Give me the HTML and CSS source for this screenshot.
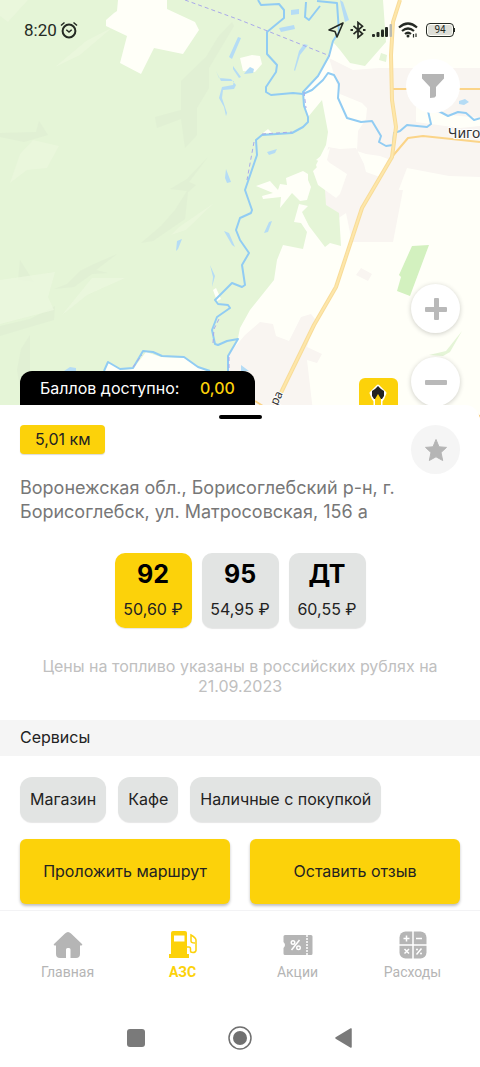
FILE: index.html
```html
<!DOCTYPE html>
<html lang="ru">

<head>
    <meta charset="utf-8">
    <meta name="viewport" content="width=device-width, initial-scale=1">
    <title>АЗС</title>
    <link rel="stylesheet" href="styles.css">
</head>

<body>
    <section class="map">
        <svg class="map-canvas" viewBox="0 0 480 420" preserveAspectRatio="xMidYMid slice" aria-hidden="true">
            <rect width="480" height="420" fill="#fffff8" />

            <!-- Built-up areas -->
            <g fill="#f9f5f1">
                <path d="M329 58l24 12 26-2h101v109l-31-1-42-8-16 42H326l-1-18 1-28 2-17 12 2 16-1 8 16 2 8 14 5 8-18-8-3-14-2-9-3 1-20 8-12 1-11-5-5-22-9z" />
                <path d="M325 190h78l-10 52h-41l-6-29-12 8-9-20z" />
                <path d="M228 355l17-20 15-13 13 2 3 12 13 5 12-24 10-3 4 5-8 28 15 7-5 9-10-3 7 60h-86z" />
                <path d="M361 268l11 6-4 7-12-6z" />
            </g>
            <path d="M416 106l25 8 39 4v8l-20 2-44-6z" fill="#fffff8" />

            <!-- Forest -->
            <g fill="#e5f5d7">
                <path d="M0 0H383L386 42 365 66 350 63 340 50 333 42 329 58 318 76 303 92 305 110 308 117 322 100 328 132 326 145 316 165 325 190 326 205 339 213 341 246 330 243 325 247 309 226 302 212 308 206 299 204 294 222 301 223 307 232 303 249 283 245 277 260 274 280 250 310 240 328 238 338 228 356V371H0z" />
            </g>
            <path d="M412 246l17-1-19 51-13-5 4-14-2-2z" fill="#d3f1bf" />
            <path d="M429 355l17-4 16-20-12 21-7 4z" fill="#e5f5d7" />
            <path d="M381 53l6 2-1 7-7-2z" fill="#e5f5d7" />
            <path d="M0 370h110v50H0z" fill="#e5f5d7" />

            <!-- Terrain shading -->
            <g fill="#dfeed3" opacity=".6">
                <path d="M232 22l-14 15-12 20-25 24v29l-26 7 2 11 24-9 4 29 12-13v-27l12-20v-20l25-42z" />
                <path d="M208 157l-21 22-17 10 17 2-12 19-14 16-20 17 12-2 32-22 3-27 8-7-7-3z" />
                <path d="M0 133l36-1 3-11 9 14-24 7-24-5z" />
                <path d="M117 254l-23 10-14 7-13 13-13 5 20-2 18-13 16-1-12-3z" />
                <path d="M30 335l-9 14-4 21 3 17 10-4zM0 326l30-7 25-13-1 14-24 7-30 9z" />
                <path d="M20 260l14 22-16-2z" />
            </g>
            <g fill="#edf8df" opacity=".7">
                <path d="M33 140l26 6-12 22-20 2-17 13 10-29zM0 0h28L8 22 0 16zM113 27L80 55 55 67l31-26z" />
                <path d="M0 280l55-8-7 25 6 13-54 14zM125 278l-38 17-25 20 30-37zM214 203l-35 24-8 8 15-5z" />
            </g>

            <!-- Clearings -->
            <g fill="#fffff8">
                <path d="M118 0h49v9l28 13 4 8-16 24-29-6-13 26-21-11 7-27-21-10v-6l8-7 3-2z" />
                <path d="M240 58l12-3 8 1 2 8-7 8-12-1z" />
                <path d="M256 186L270 181 278 190 280 184 287 185 286 178 303 171 308 174V180L311 187 307 200 300 201 292 193 280 208 281 197 263 199 262 196 273 193z" />
                <path d="M330 148L316 160 322 162 313 171 318 185 336 198 340 194 347 174 330 163 327 160z" />
                <path d="M104 371l5-9 13 8 11-1 13-17 15 5 24 1 17 11 8 4H228V420H104z" />
                <path d="M213 290l4 11 4-2-5-11zM263 133l5-4 4 4z" />
            </g>

            <!-- Rivers -->
            <g fill="none" stroke="#91ccf3" stroke-width="2" stroke-linejoin="round">
                <path d="M317 1L337 3 339 32 333 41 329 56 318 76 303 92 304 106 308 117V122L303 127 292 133 262 135 256 140 257 155 245 190 252 210 251 213 240 218 236 230 240 240 249 253 242 265 245 285 242 287 232 283 215 300 218 304 228 305 230 308 217 317 212 330 215 344 218 345 227 341 238 339 228 356V372" />
                <path d="M258 0l3 5 18-1 5 6v8l-17 14v22l10 11-1 7-10 15v5l5 3 22-2 10 1 9-4 11-10 5-7 6 2 5 9-1 14 9 20 14 4 11-1 9 15-2 6 7 4 7-1 1-12 6-2 7-6 20 2 4-3-3-13 5-3 15 8 10-4 8 1 8 7 14-4" />
                <path d="M306 2l-1 15 4 3 11-14M104 371l4-9 12 7 13-1 10-17 10 1 9 4 22 1 14 10 12 4" />
            </g>
            <g fill="#b5dcf5">
                <path d="M340 0l3 2 6 18-4 2-4-17zM291 10l8-1v5l-8 1zM279 28l15-3 1 4-14 3zM304 44l4 1-8 10-5 16-1-1 5-19zM250 67l4 2-1 4-9 1 3-4zM216 71l3 7 12 1 5 6-2 4-11 1-1 8 5 15-1 3-2-9-5-9 3-11 11-2 1-4-13 0-2-4z" />
                <path d="M226 169l5 13-4 1-2-5zM229 57l9-20 3 1-9 21zM233 66l8 11-2 1-6-9zM267 152l10-3-2 4-6 2zM269 222l3-1-4 11-4 1zM224 231l8 14 3 2-6-14zM210 265l5 11-3 11 1-10zM177 241l5-2-4 10-2 2zM459 101l6-2 4 3-5 3-5-1zM64 371l6-4 6 1v4zM241 365l8 6h-8z" />
            </g>

            <!-- District borders -->
            <g fill="none" stroke="#a9a9ea" stroke-width="1" stroke-dasharray="4 3">
                <path d="M185 0l55 20 90 36M262 134l30-2M254 142l-7 38M304 92l2 16M213 343l1-14 5-10M133 367l9-12M229 368v-14" />
            </g>

            <!-- Roads -->
            <g fill="none" stroke-linejoin="round">
                <path d="M393 89h87M391 158l17-20 15-2 57 6M255 401l8 5" stroke="#fbd488" stroke-width="2" />
                <path d="M400 0l-7 22-2 33 1 45 4 27-4 30-30 51-26 79-22 38-40 82" stroke="#f8dc99" stroke-width="4" />
                <path d="M400 0l-7 22-2 33 1 45 4 27-4 30-30 51-26 79-22 38-40 82" stroke="#fee7aa" stroke-width="2" />
                <path d="M477 414l3 3" stroke="#f8b84d" stroke-width="2" />
            </g>

            <g class="map-label">
                <text x="448" y="138">Чиго</text>
                <text transform="translate(277 406) rotate(-64)" class="map-label-small">ра</text>
            </g>

            <!-- Station pin -->
            <rect x="359" y="378" width="39" height="42" rx="6" fill="#fcd20a" />
            <path d="M378 386l7 7-2 5-2 3v19h-6v-19l-2-3-2-5z" fill="#fff" stroke="#fff" stroke-width="3" stroke-linejoin="round" />
            <path d="M378 386l3 3 3 2v5l-2 3h-8l-2-3v-5l3-2z" fill="#222" />
            <path d="M375 420v-21l3-5 3 5v21z" fill="#fcd20a" />
        </svg>

        <div class="status-bar">
            <span>8:20</span>
            <svg width="18" height="18" viewBox="0 0 18 18" fill="none" stroke="#252a24" stroke-width="2">
                <circle cx="9" cy="10" r="6.4" />
                <path d="M6.300 8.700L9 11l2.700-2.300M1 4.500L4.500 1.500M17 4.500L13.500 1.500" stroke-width="1.500" />
            </svg>
            <div class="status-icons">
                <svg width="18" height="18" viewBox="0 0 18 18" fill="none" stroke="#252a24" stroke-width="1.600" stroke-linejoin="round">
                    <path d="M16 2L2 9l6 1.500L10 16z" />
                </svg>
                <svg width="16" height="18" viewBox="0 0 16 18" fill="none" stroke="#252a24" stroke-width="1.700">
                    <path d="M3.500 4.800l9 8L8 16.500v-15l4.500 3.700-9 8" />
                    <path d="M.5 9h2.500M13 9h2.500" stroke-width="2" />
                </svg>
                <svg width="22" height="18" viewBox="0 0 22 18" fill="#252a24">
                    <rect x="1" y="13" width="3" height="3" rx="1" />
                    <rect x="5.500" y="11" width="3" height="5" rx="1" />
                    <rect x="10" y="8.500" width="3" height="7.500" rx="1" />
                    <rect x="14" y="6" width="3" height="10" rx="1" />
                    <rect x="18.500" y="3" width="2.500" height="13" rx="1" fill="#b9bbb2" />
                </svg>
                <svg width="20" height="18" viewBox="0 0 20 18" fill="none" stroke="#252a24" stroke-width="2.200">
                    <path d="M1 6.500q9-8 18 0M4 10q6-5 12 0M7 13q3-2.500 6 0" />
                    <circle cx="10" cy="15" r="1.500" fill="#252a24" stroke="none" />
                    <path d="M15.500 13v3.500M18 12.500V16" stroke-width="1.200" />
                </svg>
                <span class="battery">94</span>
            </div>
        </div>

        <div class="map-overlay">
            <div class="balance">Баллов доступно: <b>0,00</b></div>
            <div class="map-controls">
                <button type="button" class="round-button filter" aria-label="Фильтр">
                    <svg width="24" height="26" viewBox="0 0 24 26" fill="#b5b5b5">
                        <path d="M1 1h22v4.500l-8 8.500v9l-1.500 1.500L9 25V14L1 5.500z" />
                    </svg>
                </button>
                <button type="button" class="round-button zoom" aria-label="Приблизить">
                    <svg width="22" height="22" viewBox="0 0 22 22" fill="#b9b9b9">
                        <rect y="9" width="22" height="5" rx="1" />
                        <rect x="9" width="5" height="22" rx="1" />
                    </svg>
                </button>
                <button type="button" class="round-button zoom" aria-label="Отдалить">
                    <svg width="22" height="22" viewBox="0 0 22 22" fill="#b9b9b9">
                        <rect y="9" width="22" height="5" rx="1" />
                    </svg>
                </button>
            </div>
        </div>
    </section>

    <main class="sheet">
        <div class="handle"></div>
        <div class="sheet-top">
            <span class="distance">5,01 км</span>
            <button type="button" class="round-button favourite" aria-label="В избранное">
                <svg width="22" height="22" viewBox="0 0 22 22" fill="#b5b5b5" stroke="#b5b5b5" stroke-linejoin="round">
                    <path d="M11 .5l3 7.300 7.500.6-5.500 5.100 1.700 8L11 17.800 4.300 21.500l1.700-8L.5 8.400 8 7.800z" />
                </svg>
            </button>
        </div>
        <p class="address">Воронежская обл., Борисоглебский р-н, г. Борисоглебск, ул. Матросовская, 156 а</p>

        <div class="fuels">
            <button type="button" class="fuel active"><b>92</b><span>50,60 ₽</span></button>
            <button type="button" class="fuel"><b>95</b><span>54,95 ₽</span></button>
            <button type="button" class="fuel"><b>ДТ</b><span>60,55 ₽</span></button>
        </div>
        <p class="note">Цены на топливо указаны в российских рублях на 21.09.2023</p>

        <h2>Сервисы</h2>
        <ul class="services">
            <li>Магазин</li>
            <li>Кафе</li>
            <li>Наличные с покупкой</li>
        </ul>
        <div class="actions">
            <button type="button">Проложить маршрут</button>
            <button type="button">Оставить отзыв</button>
        </div>
    </main>

    <nav class="tabs">
        <a href="#home">
            <svg width="30" height="28" viewBox="0 0 30 28" fill="#b5b5b5">
                <path d="M15 1q1.500 0 3 1.500L29 13q1 1.300-.6 1.500H27V23q0 4-4 4h-5.500v-8.500q0-1.500-1.500-1.500h-1.500q-1.500 0-1.500 1.500V27H7q-4 0-4-4v-8.500H1.600Q0 14.300 1 13L12 2.500Q13.500 1 15 1z" />
            </svg>
            Главная
        </a>
        <a href="#stations" class="current">
            <svg width="30" height="28" viewBox="0 0 30 28" fill="#fcd20a">
                <path fill-rule="evenodd" d="M5 0h12q2 0 2 2v21h2v4H1v-4h2V2q0-2 2-2zm1 4.500v6h10.500v-6z" />
                <path d="M19 16h2q1.500 0 1.500 2v2q0 1.500 2.500 1.500t3-2V9q0-2-5-5v6q0 2 4 2" fill="none" stroke="#fcd20a" stroke-width="1.500" />
            </svg>
            АЗС
        </a>
        <a href="#offers">
            <svg width="30" height="28" viewBox="0 0 30 28">
                <path d="M2 4h26q1.500 0 1.500 1.500v17Q29.500 24 28 24H2Q.5 24 .5 22.500V17q3-3 0-6V5.500Q.5 4 2 4z" fill="#b5b5b5" />
                <g fill="none" stroke="#fff">
                    <path d="M24 4v20" stroke-width="1.500" stroke-dasharray="2 1" />
                    <path d="M16.500 9l-8 10" stroke-width="1.500" />
                    <circle cx="10" cy="11.500" r="1.800" stroke-width="1.400" />
                    <circle cx="15.500" cy="16.800" r="1.800" stroke-width="1.400" />
                </g>
            </svg>
            Акции
        </a>
        <a href="#expenses">
            <svg width="28" height="28" viewBox="0 0 28 28">
                <rect x=".5" y=".5" width="27" height="27" rx="6" fill="#b5b5b5" />
                <path d="M14 0v28M0 14h28" stroke="#fff" stroke-width="1.500" />
                <path d="M4.500 7.500h6M7.500 4.500v6M17 7.500h6M5.500 18l4.500 4.500M10 18l-4.500 4.500M17.500 23.500l5-6" stroke="#fff" stroke-width="1.500" />
                <circle cx="18" cy="18.500" r="1" fill="#fff" />
                <circle cx="22" cy="22.500" r="1" fill="#fff" />
            </svg>
            Расходы
        </a>
    </nav>

    <div class="system-nav">
        <button type="button" aria-label="Недавние">
            <svg width="24" height="24" viewBox="0 0 24 24"><rect x="3" y="3" width="18" height="18" rx="3" fill="#7a7a7a" /></svg>
        </button>
        <button type="button" aria-label="Домой">
            <svg width="24" height="24" viewBox="0 0 24 24">
                <circle cx="12" cy="12" r="11" fill="none" stroke="#707070" stroke-width="1.500" />
                <circle cx="12" cy="12" r="7" fill="#707070" />
            </svg>
        </button>
        <button type="button" aria-label="Назад">
            <svg width="24" height="24" viewBox="0 0 24 24"><path d="M19 3v18L4 12z" fill="#7a7a7a" stroke="#7a7a7a" stroke-width="1.500" stroke-linejoin="round" /></svg>
        </button>
    </div>
</body>

</html>
```
FILE: styles.css
```css
:root {
    --yellow: #fcd20a;
    --grey: #e2e4e3;
    --muted: #b5b5b5;
    --side: 20px;
}

* {
    box-sizing: border-box;
}

body {
    margin: 0;
    min-height: 100vh;
    display: flex;
    flex-direction: column;
    background: #fff;
    color: #222;
    font-family: Inter, "Noto Sans", sans-serif;
    font-size: 16px;
    font-weight: 400;
    line-height: 20px;
}

button {
    border: none;
    padding: 0;
    background: none;
    font: inherit;
    color: inherit;
    cursor: pointer;
}

svg {
    display: block;
    flex: none;
}

/* Map */
.map {
    position: relative;
    flex: 1;
    min-height: 320px;
    display: flex;
    flex-direction: column;
    overflow: hidden;
}

.map-canvas {
    position: absolute;
    inset: 0;
    width: 100%;
    height: 100%;
}

.map-label {
    font-family: "Noto Sans", sans-serif;
    font-size: 14px;
    fill: #333;
    stroke: #fff;
    stroke-width: 2px;
    paint-order: stroke;
}

.map-label-small {
    font-size: 12px;
}

.status-bar {
    position: relative;
    display: flex;
    align-items: center;
    gap: 3px;
    padding: 20px 26px 0 24px;
    font-family: Roboto, sans-serif;
    font-size: 17px;
    color: #252a24;
}

.status-icons {
    margin-left: auto;
    display: flex;
    align-items: center;
    gap: 5px;
}

.battery {
    position: relative;
    width: 28px;
    margin-left: 3px;
    border: 1px solid #252a24;
    border-radius: 4px;
    background: #dedfd8;
    box-shadow: inset 0 0 0 1px #fffff8;
    font-size: 10px;
    line-height: 12px;
    text-align: center;
}

.battery::after {
    content: "";
    position: absolute;
    left: 100%;
    top: 4px;
    width: 2px;
    height: 4px;
    background: #252a24;
}

.map-overlay {
    position: relative;
    flex: 1;
    display: flex;
    justify-content: space-between;
    padding: 19px var(--side) 14px;
}

.balance {
    align-self: flex-end;
    padding: 7px var(--side) 8px;
    border-radius: 12px 12px 0 0;
    background: #000;
    color: #fff;
}

.balance b {
    margin-left: 16px;
    font-weight: 500;
    color: var(--yellow);
}

.map-controls {
    display: flex;
    flex-direction: column;
    align-items: flex-end;
    gap: 24px;
}

.round-button {
    display: flex;
    align-items: center;
    justify-content: center;
    width: 49px;
    height: 49px;
    flex: none;
    border-radius: 50%;
    background: #fff;
}

.filter {
    width: 54px;
    height: 54px;
    margin-bottom: auto;
}

.zoom {
    box-shadow: 0 1px 5px rgba(0, 0, 0, .2);
}

/* Bottom sheet */
.sheet {
    position: relative;
    margin-top: -15px;
    padding-top: 10px;
    border-radius: 0 15px 0 0;
    background: #fff;
}

.handle {
    width: 43px;
    height: 4px;
    margin: 0 auto;
    border-radius: 2px;
    background: #000;
}

.sheet-top {
    display: flex;
    justify-content: space-between;
    align-items: flex-start;
    padding: 6px var(--side) 0;
}

.distance {
    padding: 4px 14px 5px 15px;
    border-radius: 4px;
    background: var(--yellow);
    box-shadow: 0 1px 1px rgba(0, 0, 0, .15);
}

.favourite {
    background: #f5f5f5;
}

.address {
    margin: 2px 60px 0 var(--side);
    font-size: 18px;
    line-height: 24px;
    color: #777;
}

.fuels {
    display: flex;
    justify-content: center;
    gap: 10px;
    margin-top: 29px;
}

.fuel {
    display: flex;
    flex-direction: column;
    align-items: center;
    gap: 11px;
    min-width: 77px;
    padding: 7px 8px 9px;
    border-radius: 10px;
    background: var(--grey);
    box-shadow: 0 1px 1px rgba(0, 0, 0, .1);
}

.fuel.active {
    background: var(--yellow);
}

.fuel b {
    font-size: 25px;
    font-weight: 700;
    line-height: 28px;
    color: #000;
}

.note {
    margin: 28px var(--side) 24px;
    line-height: 20px;
    text-align: center;
    color: #c0c0c0;
}

h2 {
    margin: 0;
    padding: 7px var(--side) 9px;
    background: #f5f5f5;
    font-size: 16px;
    font-weight: 400;
}

.services {
    display: flex;
    flex-wrap: wrap;
    gap: 12px;
    margin: 21px var(--side) 17px;
    padding: 0;
    list-style: none;
}

.services li {
    padding: 12px 10px 13px;
    border-radius: 12px;
    background: var(--grey);
    box-shadow: 0 1px 1px rgba(0, 0, 0, .1);
}

.actions {
    display: flex;
    gap: 20px;
    padding: 0 var(--side) 6px;
}

.actions button {
    flex: 1;
    padding: 22px 10px 23px;
    border-radius: 6px;
    background: var(--yellow);
    box-shadow: 0 2px 3px rgba(0, 0, 0, .25);
}

/* Tab bar */
.tabs {
    display: grid;
    grid-template-columns: repeat(4, 1fr);
    padding: 20px 10px 30px;
    border-top: 1px solid #f3f3f5;
}

.tabs a {
    display: flex;
    flex-direction: column;
    align-items: center;
    gap: 4px;
    font-family: Roboto, sans-serif;
    font-size: 14px;
    line-height: 18px;
    color: var(--muted);
    text-decoration: none;
}

.tabs .current {
    font-weight: 700;
    color: var(--yellow);
}

.system-nav {
    display: flex;
    justify-content: center;
    gap: 80px;
    padding: 15px 0 17px;
}
```
